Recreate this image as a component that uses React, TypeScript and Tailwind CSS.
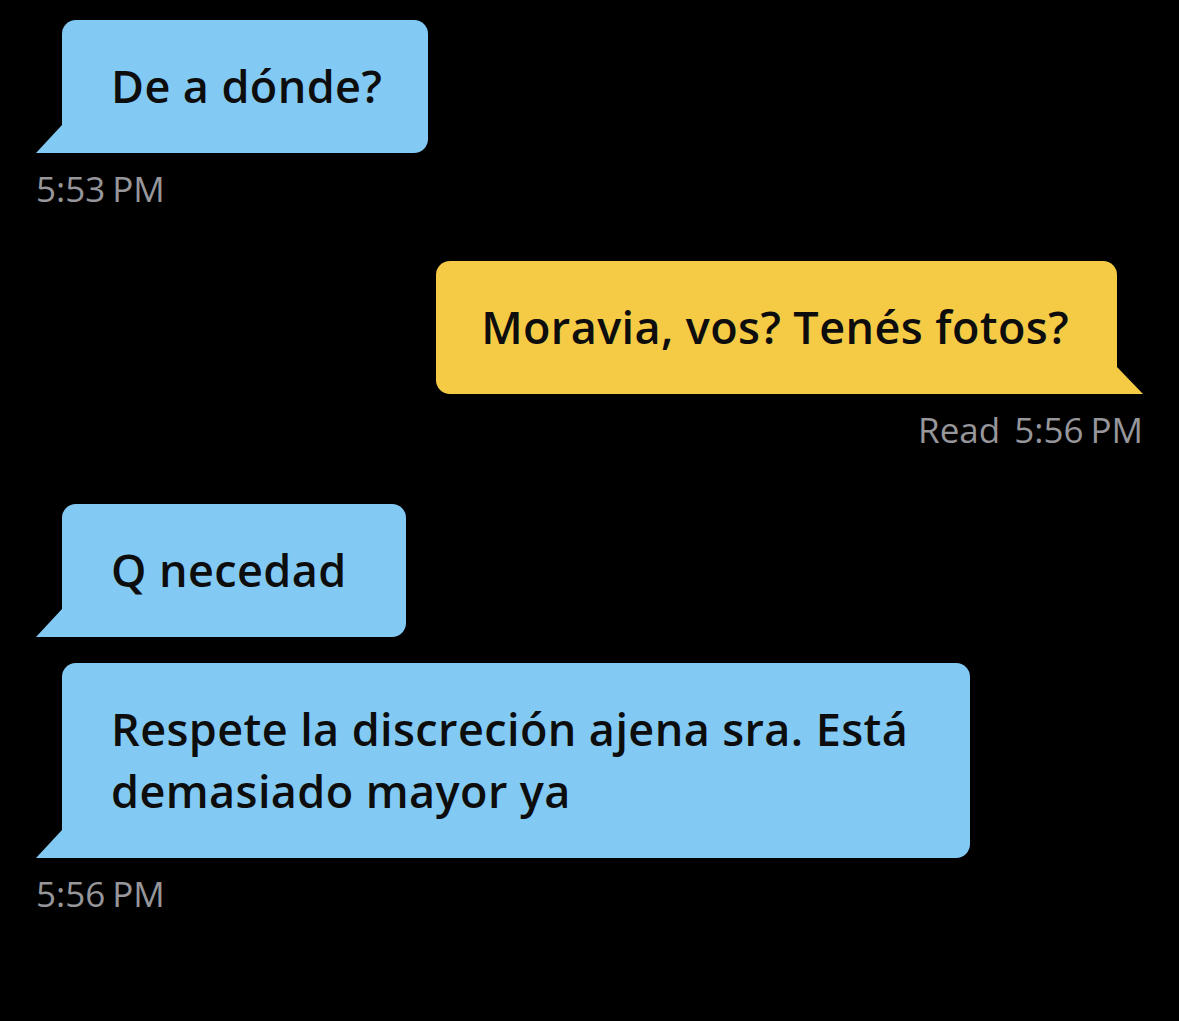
import React from "react";

const font = { fontFamily: '"Open Sans", "Noto Sans", sans-serif' };

function LeftBubble({
  children,
  wide,
  extra,
}: {
  children: React.ReactNode;
  wide?: boolean;
  extra?: boolean;
}) {
  return (
    <div className="relative ml-[26px]">
      <svg
        className="absolute left-[-26px] bottom-0"
        width="26"
        height="28"
        viewBox="0 0 26 28"
      >
        <polygon points="26,0 26,28 0,28" fill="#82CAF4" />
      </svg>
      <div
        className={
          "bg-[#82CAF4] text-[#0d0d0d] rounded-[14px] rounded-bl-none pl-[49px] pt-[35px] pb-[36px] text-[45px] leading-[62px] font-semibold tracking-[0.4px] " +
          (wide ? "w-[908px] pr-[46px]" : extra ? "pr-[59px]" : "pr-[46px]")
        }
      >
        {children}
      </div>
    </div>
  );
}

function RightBubble({ children }: { children: React.ReactNode }) {
  return (
    <div className="relative mr-[26px]">
      <svg
        className="absolute right-[-26px] bottom-0"
        width="26"
        height="27"
        viewBox="0 0 26 27"
      >
        <polygon points="0,0 0,27 26,27" fill="#F5CB46" />
      </svg>
      <div className="bg-[#F5CB46] text-[#0d0d0d] rounded-[14px] rounded-br-none pl-[45px] pr-[48px] pt-[35px] pb-[36px] text-[45px] leading-[62px] font-semibold tracking-[0.4px]">
        {children}
      </div>
    </div>
  );
}

function Time({ t, read }: { t: string; read?: boolean }) {
  return (
    <div className="mt-[14px] flex items-center text-[35px] leading-[44px] text-[#96969b]">
      {read && <span className="mr-[14px]">Read</span>}
      <span>{t}</span>
      <span className="ml-[7px]">PM</span>
    </div>
  );
}

export default function App() {
  return (
    <div className="min-h-[1021px] w-full bg-black pl-[36px] pr-[36px] pt-[20px]" style={font}>
      <div className="flex flex-col items-start">
        <LeftBubble>De a dónde?</LeftBubble>
        <Time t="5:53" />
      </div>

      <div className="mt-[50px] flex flex-col items-end">
        <RightBubble>Moravia, vos? Tenés fotos?</RightBubble>
        <Time t="5:56" read />
      </div>

      <div className="mt-[52px] flex flex-col items-start">
        <LeftBubble extra>Q necedad</LeftBubble>
        <div className="mt-[26px]">
          <LeftBubble wide>Respete la discreción ajena sra. Está demasiado mayor ya</LeftBubble>
        </div>
        <Time t="5:56" />
      </div>
    </div>
  );
}
